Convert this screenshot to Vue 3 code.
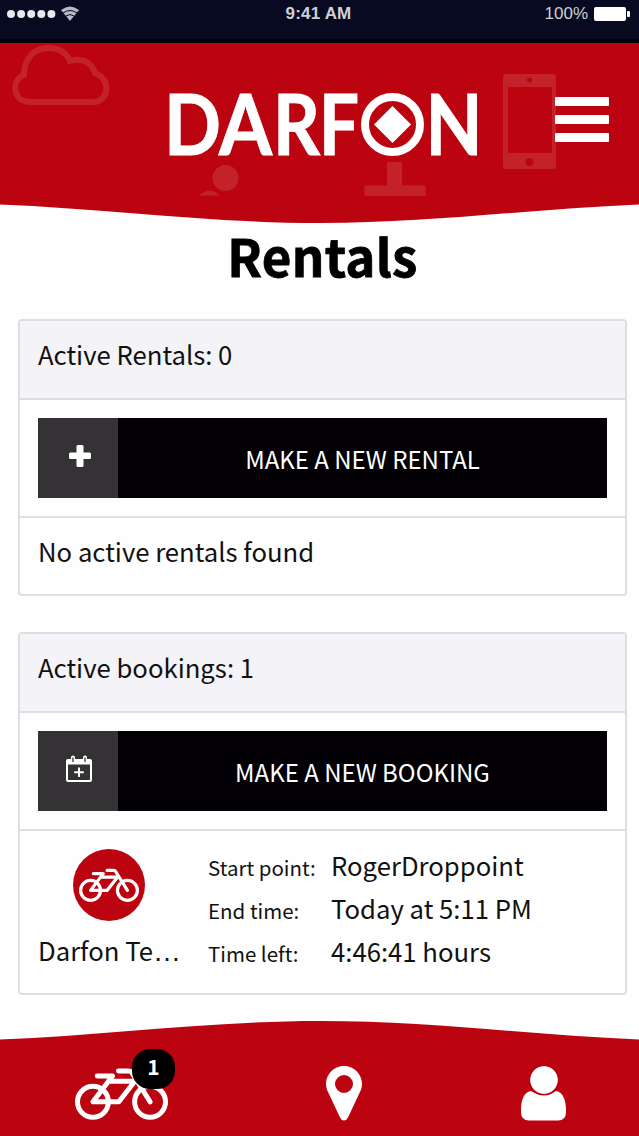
<template>
  <div class="app">
    <div class="status-bar">
      <div class="status-left">
        <svg class="signal" viewBox="0 0 74 18">
          <circle v-for="n in 5" :key="n" :cx="n * 10.1 - 5.1" cy="9" r="4" />
          <path d="M55 5 Q64 -2 73 5 L64 16 Z" class="wifi" />
          <path d="M57 8 Q64 3 71 8 M60 11 Q64 8 68 11" class="wifi-gap" />
        </svg>
      </div>
      <div class="status-time">9:41 AM</div>
      <div class="status-right">
        <span>100%</span>
        <svg class="battery" viewBox="0 0 37 14">
          <rect x="0" y="0" width="32" height="14" rx="2" />
          <rect x="33" y="4" width="3" height="6" rx="1" />
        </svg>
      </div>
    </div>

    <header class="header">
      <svg class="header-bg" viewBox="0 0 639 180">
        <path d="M0 0 H639 V161.500 C530 166 430 180 320 180 C210 180 110 166 0 161.500 Z" fill="#bb0410" />
        <g class="deco-line">
          <path d="M30 59 C12 59 11 36 24 32 C24 16 34 5 48 5 C58 5 66 9 70 18 C82 14 92 20 95 30 C112 36 109 59 93 59 Z" />
        </g>
        <g class="deco-fill">
          <circle cx="225.500" cy="135" r="13" />
          <path d="M199 152.500 Q210 143 220 152.500 Z" />
          <path d="M387 119 h15 v23.500 h23.500 v10.500 h-61 v-10.500 h22.500 Z" />
          <path fill-rule="evenodd" d="M506 31 h47 q3 0 3 3 v89 q0 3 -3 3 h-47 q-3 0 -3 -3 v-89 q0 -3 3 -3 Z M508 44 v66 h44 v-66 Z M527 37 a2.500 2.500 0 1 0 5 0 a2.500 2.500 0 1 0 -5 0 Z M525.500 119 a4 4 0 1 0 8 0 a4 4 0 1 0 -8 0 Z" />
        </g>
      </svg>
      <svg class="logo" viewBox="0 0 312 68" role="img" aria-label="Darfon">
        <text x="-4" y="64.500" textLength="57" lengthAdjust="spacingAndGlyphs">D</text>
        <text x="51" y="64.500" textLength="53" lengthAdjust="spacingAndGlyphs">A</text>
        <text x="105" y="64.500" textLength="47" lengthAdjust="spacingAndGlyphs">R</text>
        <text x="151" y="64.500" textLength="40" lengthAdjust="spacingAndGlyphs">F</text>
        <circle cx="224.500" cy="34.500" r="27.500" fill="none" stroke="#fff" stroke-width="8" />
        <path d="M224.500 16 L243 34.500 L224.500 53 L206 34.500 Z" fill="#fff" />
        <text x="257.500" y="64.500" textLength="57" lengthAdjust="spacingAndGlyphs">N</text>
      </svg>
      <button class="menu-btn" type="button" aria-label="Menu">
        <span></span>
        <span></span>
        <span></span>
      </button>
    </header>

    <main class="content">
      <h1>Rentals</h1>

      <section class="card">
        <div class="card-header">Active Rentals: {{ rentals.length }}</div>
        <div class="card-action">
          <button class="action-btn" type="button">
            <span class="action-icon">
              <svg class="icon-plus" viewBox="0 0 22 22">
                <path d="M9 0 h4 q1.500 0 1.500 1.500 v6 h6 q1.500 0 1.500 1.500 v3.500 q0 1.500 -1.500 1.500 h-6 v6.500 q0 1.500 -1.500 1.500 h-4 q-1.500 0 -1.500 -1.500 v-6.500 h-6 q-1.500 0 -1.500 -1.500 v-3.500 q0 -1.500 1.500 -1.500 h6 v-6 q0 -1.500 1.500 -1.500 Z" />
              </svg>
            </span>
            <span class="action-label">MAKE A NEW RENTAL</span>
          </button>
        </div>
        <div v-if="!rentals.length" class="card-empty">No active rentals found</div>
      </section>

      <section class="card">
        <div class="card-header">Active bookings: {{ bookings.length }}</div>
        <div class="card-action">
          <button class="action-btn" type="button">
            <span class="action-icon">
              <svg class="icon-calendar" viewBox="0 0 26 28">
                <path fill-rule="evenodd" d="M2 4 h3 v-1.500 a2 2 0 0 1 4 0 v1.500 h8 v-1.500 a2 2 0 0 1 4 0 v1.500 h3 q2 0 2 2 v19 q0 2 -2 2 h-22 q-2 0 -2 -2 v-19 q0 -2 2 -2 Z M2 9.500 v15.500 h22 v-15.500 Z" />
                <path d="M7 2.500 v4.500 M19 2.500 v4.500" class="calendar-ring" />
                <path d="M13 12.500 v9.500 M8.200 17.200 h9.600" class="calendar-plus" />
              </svg>
            </span>
            <span class="action-label">MAKE A NEW BOOKING</span>
          </button>
        </div>
        <div v-for="booking in bookings" :key="booking.bike" class="booking">
          <div class="booking-bike">
            <div class="bike-avatar">
              <svg class="bike" viewBox="0 0 280 158">
                <circle cx="54" cy="104" r="46.500" />
                <circle cx="226" cy="104" r="46.500" />
                <path :d="bikeFrame" />
              </svg>
            </div>
            <div class="bike-name">{{ booking.bike }}<span class="dots">…</span></div>
          </div>
          <dl class="booking-info">
            <template v-for="row in booking.rows" :key="row.label">
              <dt>{{ row.label }}</dt>
              <dd>{{ row.value }}</dd>
            </template>
          </dl>
        </div>
      </section>
    </main>

    <footer class="footer">
      <svg class="footer-bg" viewBox="0 0 639 115">
        <path d="M0 18.500 C110 14 210 0 320 0 C430 0 530 14 639 18.500 V115 H0 Z" fill="#bb0410" />
      </svg>
      <nav class="tabs">
        <a class="tab">
          <span class="tab-icon">
            <svg class="bike" viewBox="0 0 280 158">
              <circle cx="54" cy="104" r="46.500" />
              <circle cx="226" cy="104" r="46.500" />
              <path :d="bikeFrame" />
            </svg>
            <span class="badge">{{ bookings.length }}</span>
          </span>
        </a>
        <a class="tab">
          <svg class="pin" viewBox="0 0 36 55">
            <path fill-rule="evenodd" d="M18 0 C8 0 0 8 0 18 C0 22 1.500 25 3 28 L14 51.500 Q15.500 54.500 18 54.500 Q20.500 54.500 22 51.500 L33 28 C34.500 25 36 22 36 18 C36 8 28 0 18 0 Z M18 9 a9 9 0 1 1 0 18 a9 9 0 1 1 0 -18 Z" />
          </svg>
        </a>
        <a class="tab">
          <svg class="user" viewBox="0 0 45 55">
            <path d="M10 25 C3 26 0 34 0 44 V46 Q0 54.500 8 54.500 H37 Q45 54.500 45 46 V44 C45 34 42 26 35 25 Q23 33 10 25 Z" />
            <circle cx="23" cy="14" r="14.500" class="user-gap" />
            <circle cx="23" cy="14" r="13.700" />
          </svg>
        </a>
      </nav>
    </footer>
  </div>
</template>

<script setup>
import { ref } from 'vue'

const bikeFrame = 'M67 26 H113 L54 104 H132 L180 42 H101 M131 11 H162 Q168 11 171 16 L226 104'

const rentals = ref([])

const bookings = ref([
  {
    bike: 'Darfon Te',
    rows: [
      { label: 'Start point:', value: 'RogerDroppoint' },
      { label: 'End time:', value: 'Today at 5:11 PM' },
      { label: 'Time left:', value: '4:46:41 hours' }
    ]
  }
])
</script>

<style>
body {
  background: #fefefe;
}
</style>

<style scoped>
.app {
  display: flex;
  flex-direction: column;
  height: 1136px;
  overflow: hidden;
  background: #fefefe;
  color: #111;
  font-family: 'Noto Sans CJK JP', sans-serif;
}

.app * {
  box-sizing: border-box;
}

.status-bar {
  flex: none;
  display: grid;
  grid-template-columns: 1fr auto 1fr;
  height: 43px;
  padding: 5px 8px 0 6px;
  border-bottom: 4px solid #020208;
  background: #070a20;
  color: #cfd0d8;
  font-family: 'Liberation Sans', sans-serif;
  font-size: 17px;
  line-height: 18px;
}

.signal {
  display: block;
  width: 74px;
  height: 18px;
  fill: #e8e8ee;
}

.signal .wifi {
  fill: #b9bac4;
}

.signal .wifi-gap {
  fill: none;
  stroke: #070a20;
  stroke-width: 1;
}

.status-time {
  font-weight: bold;
  letter-spacing: 0.2px;
}

.status-right {
  display: flex;
  justify-content: flex-end;
  gap: 6px;
}

.battery {
  width: 37px;
  height: 14px;
  margin-top: 2px;
  fill: #fff;
}

.header {
  position: relative;
  flex: none;
  display: flex;
  align-items: flex-start;
  height: 179px;
  padding: 47px 30px 0 168px;
}

.header-bg {
  position: absolute;
  top: 0;
  left: 0;
  width: 639px;
  height: 180px;
}

.deco-line {
  fill: none;
  stroke: #c3222b;
  stroke-width: 6;
}

.deco-fill {
  fill: #c3222b;
}

.logo {
  position: relative;
  width: 312px;
  height: 68px;
  overflow: visible;
  fill: #fff;
  font-family: Lato, sans-serif;
  font-size: 83.5px;
  font-weight: 700;
}

.logo text {
  stroke: #fff;
  stroke-width: 1;
}

.menu-btn {
  position: relative;
  display: flex;
  flex-direction: column;
  gap: 9px;
  width: 54px;
  margin: 7px 0 0 auto;
  padding: 0;
  border: none;
  background: none;
}

.menu-btn span {
  width: 54px;
  height: 9px;
  border-radius: 1px;
  background: #fff;
}

.content {
  flex: 1;
  min-height: 0;
  padding: 0 12px 0 18px;
}

h1 {
  margin: 0;
  height: 97px;
  color: #000;
  font-size: 51px;
  font-weight: 700;
  line-height: 66px;
  text-align: center;
  -webkit-text-stroke: 0.8px #000;
  letter-spacing: 0.3px;
}

.card {
  margin-bottom: 36px;
  border: 2px solid #dedde1;
  border-radius: 4px;
  font-size: 25.7px;
  line-height: 36px;
}

.card:last-child {
  margin-bottom: 0;
}

.card-header {
  height: 79px;
  padding: 15px 18px;
  border-bottom: 2px solid #dedde1;
  background: #f4f3f7;
}

.card-action {
  padding: 18px;
  border-bottom: 2px solid #dedde1;
}

.action-btn {
  display: flex;
  width: 100%;
  height: 80px;
  padding: 0;
  border: none;
  background: #020004;
  color: #fff;
  font-family: inherit;
  font-size: 24px;
}

.action-icon {
  display: flex;
  align-items: center;
  justify-content: center;
  width: 80px;
  height: 80px;
  padding: 0 0 5px 3px;
  background: #343235;
  fill: #fff;
}

.icon-plus {
  width: 22px;
  height: 22px;
}

.icon-calendar {
  width: 26px;
  height: 28px;
  margin-left: -1px;
}

.calendar-ring {
  fill: none;
  stroke: #343235;
  stroke-width: 1.3;
}

.calendar-plus {
  fill: none;
  stroke: #fff;
  stroke-width: 2;
}

.action-label {
  flex: 1;
  padding-top: 2px;
  line-height: 78px;
}

.card-empty {
  height: 76px;
  padding: 15px 18px;
}

.booking {
  display: flex;
  height: 162px;
  padding: 18px;
}

.booking-bike {
  width: 143px;
  margin-right: 27px;
}

.bike-avatar {
  display: flex;
  align-items: center;
  justify-content: center;
  width: 72px;
  height: 72px;
  margin: 0 35px;
  border-radius: 50%;
  background: #bb0410;
}

.bike {
  fill: none;
  stroke: #fff;
  stroke-width: 15;
  stroke-linecap: round;
  stroke-linejoin: round;
}

.bike-avatar .bike {
  width: 60px;
  height: 34px;
}

.bike-name {
  height: 36px;
  margin-top: 11px;
  white-space: nowrap;
}

.dots {
  font-family: 'Liberation Sans', sans-serif;
  font-size: 28px;
  line-height: 1;
}

.booking-info {
  display: grid;
  grid-template-columns: 123px 1fr;
  grid-auto-rows: 43px;
  align-items: baseline;
  flex: 1;
  margin: -2px 0 0;
  line-height: 36px;
}

.booking-info dt {
  font-size: 20.5px;
}

.booking-info dd {
  margin: 0;
}

.footer {
  position: relative;
  flex: none;
  height: 115px;
}

.footer-bg {
  position: absolute;
  top: 0;
  left: 0;
  width: 639px;
  height: 115px;
}

.tabs {
  position: relative;
  display: flex;
  justify-content: space-between;
  padding: 45px 73px 0 75px;
  fill: #fff;
}

.tab-icon {
  position: relative;
  display: block;
}

.tab-icon .bike {
  display: block;
  width: 93px;
  height: 53px;
  margin-top: 1px;
}

.badge {
  position: absolute;
  top: -18px;
  left: 57px;
  width: 43px;
  height: 40px;
  border-radius: 18px;
  background: #000;
  color: #fff;
  font-size: 21px;
  font-weight: 700;
  line-height: 34px;
  text-align: center;
}

.pin {
  display: block;
  width: 36px;
  height: 55px;
  margin-right: 2px;
}

.user {
  display: block;
  width: 45px;
  height: 55px;
}

.user-gap {
  stroke: #bb0410;
  stroke-width: 2;
}
</style>
